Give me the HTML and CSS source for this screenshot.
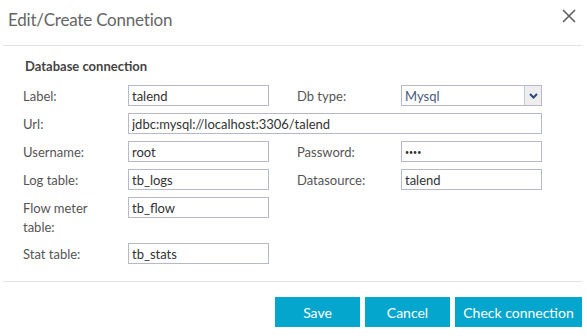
FILE: index.html
```html
<!DOCTYPE html>
<html lang="en">
<head>
    <meta charset="UTF-8">
    <meta name="viewport" content="width=device-width, initial-scale=1.0">
    <title>Edit/Create Connetion</title>
    <link rel="stylesheet" href="styles.css">
</head>
<body>
    <div class="modal">
        <div class="modal-header">
            <h4 class="modal-title">Edit/Create Connetion</h4>
            <button class="close" aria-label="Close">
                <svg width="14" height="14" viewBox="0 0 14 14">
                    <path d="M1 1L13 13M13 1L1 13" stroke="#5f5f5f" stroke-width="1.6" fill="none"/>
                </svg>
            </button>
        </div>

        <div class="modal-body">
            <h5 class="section-title">Database connection</h5>

            <div class="form-grid">
                <label>Label:</label>
                <input type="text" value="talend">
                <label class="right">Db type:</label>
                <div class="select">
                    <span>Mysql</span>
                    <span class="arrow">
                        <svg width="9" height="6" viewBox="0 0 9 6">
                            <path d="M1 1L4.5 4.5L8 1" stroke="#2b4a7d" stroke-width="2" fill="none"/>
                        </svg>
                    </span>
                </div>

                <label>Url:</label>
                <input type="text" class="wide" value="jdbc:mysql://localhost:3306/talend">

                <label>Username:</label>
                <input type="text" value="root">
                <label class="right">Password:</label>
                <input type="text" class="password" value="••••">

                <label>Log table:</label>
                <input type="text" value="tb_logs">
                <label class="right">Datasource:</label>
                <input type="text" value="talend">

                <label class="tall">Flow meter table:</label>
                <input type="text" value="tb_flow">

                <label>Stat table:</label>
                <input type="text" value="tb_stats">
            </div>
        </div>

        <div class="modal-footer">
            <button class="btn">Save</button>
            <button class="btn">Cancel</button>
            <button class="btn btn-wide">Check connection</button>
        </div>
    </div>
</body>
</html>
```

FILE: styles.css
```css
* {
    margin: 0;
    padding: 0;
    box-sizing: border-box;
    font-family: Lato, 'Open Sans', sans-serif;
}

body {
    background-color: #fff;
}

.modal {
    width: 579px;
    margin-left: 3px;
}

.modal-header {
    height: 46px;
    padding: 0 5px;
    display: flex;
    align-items: center;
    justify-content: space-between;
    border-bottom: 1px solid #e3e3e3;
}

.modal-title {
    font-size: 17px;
    font-weight: 400;
    letter-spacing: -0.2px;
    color: #666;
    margin-top: -6px;
}

.close {
    background: none;
    border: none;
    margin-top: -14px;
    margin-right: 1px;
    display: flex;
}

.modal-body {
    padding: 12px 0 17px 20px;
}

.section-title {
    font-size: 13px;
    font-weight: 700;
    color: #444;
    line-height: 16px;
    margin: 0 0 11px 2px;
}

.form-grid {
    display: grid;
    grid-template-columns: 105px 141px 132px 141px;
    grid-auto-rows: minmax(21px, auto);
    row-gap: 7px;
    align-items: start;
}

.form-grid label {
    font-size: 13px;
    color: #555;
    line-height: 19px;
    padding-top: 2px;
    grid-column: 1;
}

.form-grid label.right {
    grid-column: 3;
    padding-left: 28px;
}

.form-grid label.tall {
    width: 80px;
    height: 39px;
}

.form-grid input,
.select {
    height: 21px;
    border: 1px solid #b6b8cc;
    font-size: 13px;
    color: #333;
    padding: 0 3px;
    outline: none;
    width: 100%;
}

.form-grid input.wide {
    grid-column: 2 / 5;
}

.form-grid input.password {
    font-size: 7px;
    letter-spacing: 0;
}

.select {
    display: flex;
    align-items: center;
    justify-content: space-between;
    padding-right: 0;
    color: #4a5a7b;
}

.select .arrow {
    width: 17px;
    height: 19px;
    background-color: #eeeeee;
    border-left: 1px solid #c6c8d6;
    display: flex;
    align-items: center;
    justify-content: center;
}

.modal-footer {
    border-top: 1px solid #e3e3e3;
    padding-top: 15px;
    display: flex;
    justify-content: flex-end;
    gap: 5px;
}

.btn {
    width: 85px;
    height: 30px;
    background-color: #05a6cd;
    color: #fff;
    border: none;
    font-size: 14px;
}

.btn-wide {
    width: 127px;
}
```
